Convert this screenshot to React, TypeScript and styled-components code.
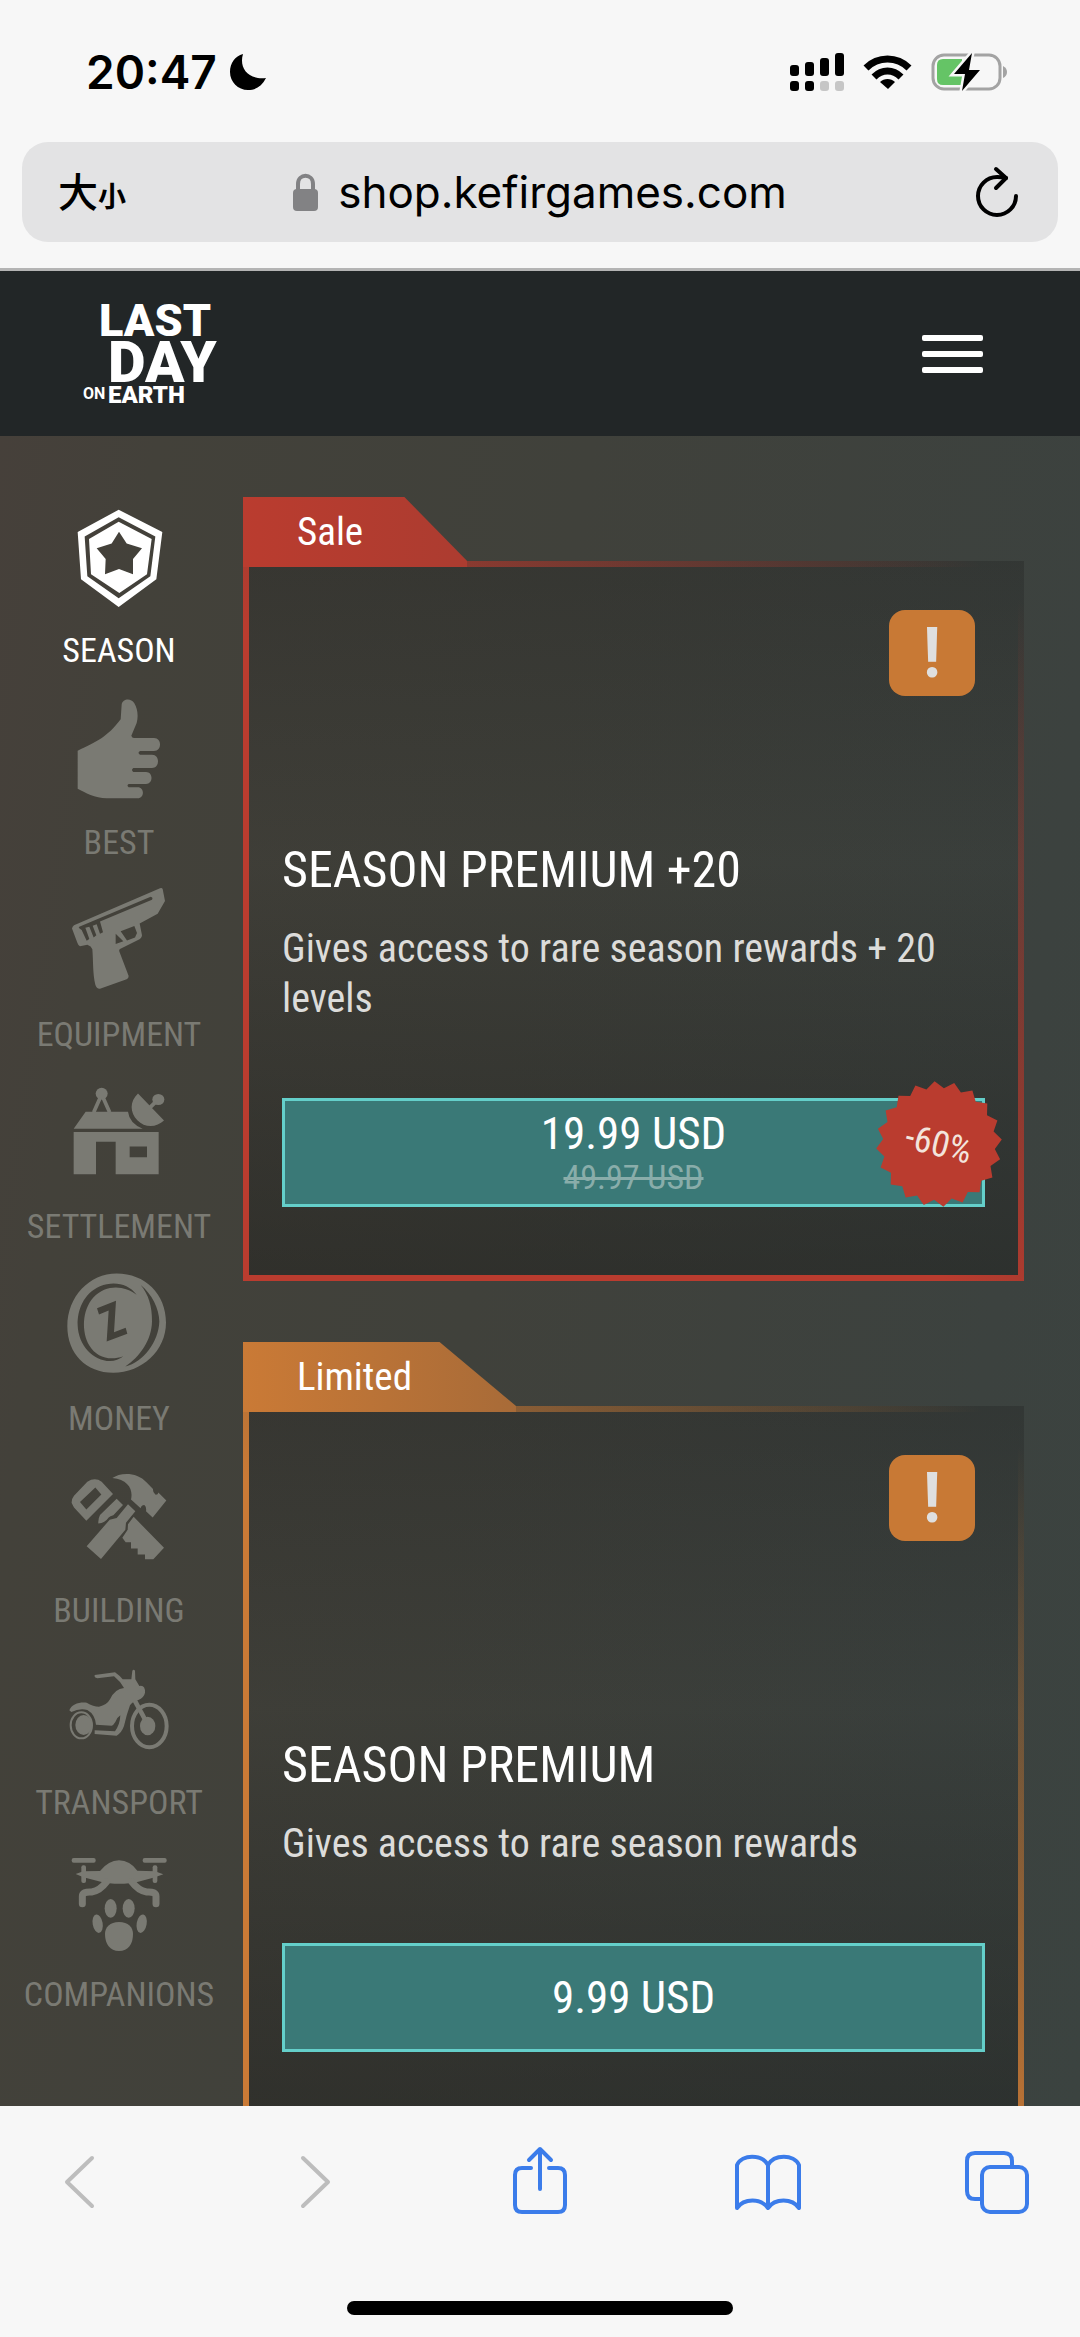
import React from "react";
import styled, { createGlobalStyle } from "styled-components";

const GlobalStyle = createGlobalStyle`
  *, *::before, *::after { box-sizing: border-box; }
  body { margin: 0; background: #f7f7f7; }
  button { border: 0; padding: 0; background: none; color: inherit; font: inherit; cursor: pointer; }
  a { color: inherit; text-decoration: none; }
  h2, p, ul { margin: 0; padding: 0; }
  ul { list-style: none; }
  svg { display: block; overflow: visible; }
`;

const systemFont = `Inter, "Liberation Sans", sans-serif`;
const shopFont = `"Roboto Condensed", Roboto, "Liberation Sans", sans-serif`;

const Screen = styled.div`
  display: flex;
  flex-direction: column;
  height: 100vh;
  font-family: ${shopFont};
`;

/* ---------- browser chrome ---------- */

const StatusBar = styled.div`
  display: flex;
  align-items: center;
  justify-content: space-between;
  padding: 36px 72px 0 86px;
  height: 108px;
  font-family: ${systemFont};
`;

const Clock = styled.div`
  display: flex;
  align-items: center;
  gap: 12px;
  font-size: 46px;
  line-height: 60px;
  font-weight: 600;
  color: #000;
`;

const StatusIcons = styled.div`
  display: flex;
  align-items: center;
  gap: 20px;
`;

const AddressArea = styled.div`
  padding: 34px 22px 26px;
  border-bottom: 3px solid #b4b4b4;
`;

const AddressBar = styled.div`
  display: grid;
  grid-template-columns: 1fr auto 1fr;
  align-items: center;
  height: 100px;
  padding: 0 36px;
  border-radius: 26px;
  background: #e3e3e4;
  color: #000;
  font-family: ${systemFont};
`;

const TextSizeButton = styled.button`
  display: flex;
  justify-self: start;
  align-items: baseline;
  font-family: "Noto Sans CJK SC", sans-serif;
  font-weight: 500;
  font-size: 40px;
  line-height: 60px;
`;

const SmallGlyph = styled.span`
  font-size: 28px;
  font-weight: 700;
`;

const Address = styled.button`
  display: flex;
  align-items: center;
  gap: 20px;
  font-size: 44px;
  line-height: 60px;
`;

const ReloadButton = styled.button`
  justify-self: end;
  padding-right: 4px;
`;

const BottomBar = styled.footer`
  display: flex;
  flex-direction: column;
  align-items: center;
  justify-content: space-between;
  height: 231px;
  padding: 35px 0 22px;
  background: #f7f7f7;
`;

const Tools = styled.nav`
  display: flex;
  justify-content: space-between;
  align-self: stretch;
  padding: 0 43px 0 40px;
`;

const ToolButton = styled.button<{ $muted?: boolean }>`
  color: ${(p) => (p.$muted ? "#bdbdbd" : "#3b7cea")};
`;

const HomeIndicator = styled.div`
  width: 386px;
  height: 14px;
  border-radius: 7px;
  background: #000;
`;

/* ---------- shop ---------- */

const ShopHeader = styled.header`
  display: flex;
  align-items: center;
  justify-content: space-between;
  height: 165px;
  padding: 0 97px 0 83px;
  background: #222627;
  color: #fff;
`;

const Logo = styled.a`
  display: grid;
  grid-template-columns: 25px auto;
  font-family: Roboto, sans-serif;
  font-weight: 900;
`;

const LogoLast = styled.span`
  grid-column: 1 / 3;
  padding-left: 16px;
  font-size: 45px;
  line-height: 38px;
`;

const LogoDay = styled.span`
  grid-column: 2;
  font-size: 58px;
  line-height: 44px;
`;

const LogoOn = styled.span`
  grid-column: 1;
  font-size: 16px;
  line-height: 20px;
  font-weight: 700;
`;

const LogoEarth = styled.span`
  font-size: 24px;
  line-height: 22px;
`;

const MenuButton = styled.button`
  display: grid;
  gap: 10px;
  width: 61px;
`;

const MenuLine = styled.span`
  height: 6px;
  border-radius: 2px;
  background: #fff;
`;

const ShopBody = styled.main`
  flex: 1;
  min-height: 0;
  overflow: hidden;
  display: grid;
  grid-template-columns: 243px minmax(0, 1fr);
  padding: 61px 56px 0 0;
  background: linear-gradient(98deg, #46403a 0%, #43413a 12%, #40413b 45%, #3c423f 85%, #3b4340 100%);
`;

const Categories = styled.ul`
  display: flex;
  flex-direction: column;
  gap: 25px;
  padding: 4px 5px 0 0;
`;

const CategoryLink = styled.a<{ $active?: boolean }>`
  display: flex;
  flex-direction: column;
  align-items: center;
  gap: 15px;
  color: ${(p) => (p.$active ? "#fff" : "#7a7a73")};
  font-size: 34px;
  line-height: 36px;
  text-transform: uppercase;
`;

const Offers = styled.section`
  display: flex;
  flex-direction: column;
  gap: 61px;
`;

const Offer = styled.article`
  display: flex;
  flex-direction: column;
  align-items: flex-start;
  flex-shrink: 0;
`;

/* The tab reaches down over the panel's top border. */
const Tab = styled.div<{ $color: string; $fade: string }>`
  z-index: 1;
  margin-bottom: -6px;
  padding: 0 104px 0 54px;
  background: linear-gradient(90deg, ${(p) => p.$color}, ${(p) => p.$fade});
  clip-path: polygon(0 0, 72% 0, 100% 64px, 100% 100%, 0 100%);
  color: #fff;
  font-size: 39px;
  line-height: 70px;
`;

const Panel = styled.div<{ $color: string }>`
  display: flex;
  flex-direction: column;
  justify-content: space-between;
  align-self: stretch;
  min-height: 720px;
  padding: 43px 33px 68px;
  border: 6px solid transparent;
  border-image: linear-gradient(to top right, ${(p) => p.$color} 45%, transparent 97%) 6;
  background: linear-gradient(180deg, rgba(24, 24, 24, 0.26), rgba(24, 24, 22, 0.08) 42%, rgba(24, 24, 22, 0.42)) border-box;
`;

const InfoButton = styled.button`
  align-self: flex-end;
  width: 86px;
  height: 86px;
  margin-right: 10px;
  border-radius: 16px;
  background: #c87935;
  color: #dfdfdf;
  font-size: 70px;
  line-height: 86px;
  font-weight: 700;
`;

const Title = styled.h2`
  color: #fff;
  font-size: 50px;
  line-height: 60px;
  font-weight: 400;
  text-transform: uppercase;
`;

const Description = styled.p`
  margin: 24px 0 74px;
  color: #dcdcda;
  font-size: 40px;
  line-height: 50px;
`;

const BuyButton = styled.button`
  position: relative;
  display: flex;
  flex-direction: column;
  align-items: center;
  justify-content: center;
  width: 100%;
  height: 109px;
  border: 3px solid #64cfca;
  background: #3a7977;
  color: #fff;
  font-size: 45px;
  line-height: 48px;
`;

const OldPrice = styled.s`
  color: #89adaa;
  font-size: 34px;
  line-height: 38px;
`;

const Seal = styled.span`
  position: absolute;
  top: -20px;
  right: -20px;
  display: grid;
  place-items: center;
  width: 126px;
  height: 126px;
  color: #f3e4dc;
  font-size: 36px;
  line-height: 40px;

  & > * { grid-area: 1 / 1; }
`;

const SealText = styled.span`
  transform: rotate(14deg);
`;

/* ---------- drawings ---------- */

const sealPoints = Array.from({ length: 40 }, (_, i) => {
  const angle = ((-4 + i * 9) * Math.PI) / 180;
  const radius = i % 2 === 0 ? 63 : 56;
  return `${(63 + radius * Math.sin(angle)).toFixed(1)},${(63 - radius * Math.cos(angle)).toFixed(1)}`;
}).join(" ");

const SealShape = () => (
  <svg width="126" height="126" aria-hidden="true">
    <polygon points={sealPoints} fill="#ba3c2f" />
  </svg>
);

const CategoryIcon = ({ box, children }: { box: string; children: React.ReactNode }) => (
  <svg width="116" height="116" viewBox={box} preserveAspectRatio="none" fill="currentColor" fillRule="evenodd" aria-hidden="true">
    {children}
  </svg>
);

const SeasonIcon = () => (
  <CategoryIcon box="183 54 348 314">
    <path d="M356 78 487 138 469 266 356 341 243 266 233 138ZM356 98 254 150 262 258 356 317 451 258 466 150ZM356 110 455 157 441 252 358 303 273 252 267 157ZM357 137 335 169 290 182 317 211 315 252 357 238 399 252 399 211 426 182 380 169Z" />
  </CategoryIcon>
);

const BestIcon = () => (
  <CategoryIcon box="183 574 348 314">
    <path d="M233 730C290 705 320 695 362 645L365 605C368 590 392 586 403 602C412 615 416 635 410 655L394 690Q396 696 402 696H462C486 696 486 731 462 731H420Q411 736 420 741H456C480 741 480 777 456 777H400Q392 782 400 788H438C460 788 460 820 438 820H386Q379 824 386 829H413C434 829 434 859 413 859H320C285 859 255 843 233 833Z" />
  </CategoryIcon>
);

const EquipmentIcon = () => (
  <CategoryIcon box="183 1094 348 314">
    <path d="M216 1212Q217 1206 222 1203L480 1103Q486 1101 488 1105L495 1137L473 1172L419 1198L426 1230Q426 1236 420 1240L360 1267Q356 1269 358 1274L386 1340Q386 1346 380 1349L300 1375Q290 1376 286 1364C278 1335 280 1300 277 1268Q274 1260 262 1256L240 1260Q234 1256 232 1250ZM236 1208Q238 1214 245 1216L260 1245 268 1240 256 1210 268 1207 281 1236 289 1230 278 1204 290 1200 300 1226 309 1222 300 1193 456 1134Q460 1128 452 1126ZM362 1219 381 1244 405 1236 411 1224 403 1205ZM347 1226V1254L370 1246Z" />
  </CategoryIcon>
);

const SettlementIcon = () => (
  <CategoryIcon box="183 73 348 314">
    <path d="M221 222H476V336H347V248H288V336H221ZM389 261V290H441V261ZM221 213 257 167H384Q388 198 428 213ZM414 118 492 191C470 210 435 212 412 190C390 170 388 140 414 118Z" />
    <ellipse cx="305" cy="118" rx="18" ry="16" />
    <ellipse cx="475" cy="134" rx="18" ry="15" />
    <path d="M300 130 281 169M310 130 329 169M447 158 472 136" fill="none" stroke="currentColor" strokeWidth="11" />
  </CategoryIcon>
);

const MoneyIcon = () => (
  <CategoryIcon box="183 593 348 314">
    <path d="M350 605C435 605 498 660 498 738C498 815 425 874 340 874C258 874 202 822 202 748C202 668 268 605 350 605ZM410 663C385 632 340 625 300 640C250 660 232 705 233 745C235 800 280 842 330 842Q352 842 370 829C330 842 290 833 268 800C245 765 245 705 280 670C320 632 375 638 410 663ZM422 636C445 660 457 695 456 735C455 785 420 830 376 857C430 845 476 790 478 735C478 700 455 660 422 636ZM291 699 297 716 326 705 320 789 382 768 377 752 342 764 348 679Z" />
  </CategoryIcon>
);

const BuildingIcon = () => (
  <CategoryIcon box="183 1112 348 314">
    <path d="M215 1226Q214 1215 222 1206L262 1168Q285 1155 305 1168L339 1201L259 1274L222 1238ZM240 1223 259 1243 304 1203 286 1184ZM350 1214 369 1231 340 1259Q330 1262 326 1265Q315 1280 295 1281Q294 1268 300 1258ZM384 1229 406 1248 378 1279 376 1298 303 1377 260 1343 329 1271 350 1266ZM337 1158C360 1143 410 1140 440 1170L459 1188Q458 1198 466 1203Q474 1204 475 1197L499 1219L458 1265L438 1248Q440 1236 433 1231Q423 1232 422 1240L393 1216C400 1190 385 1162 337 1158ZM401 1263 492 1347 460 1378H435V1365H413V1349H393V1332H377L367 1320 383 1298 384 1283Z" />
  </CategoryIcon>
);

const TransportIcon = () => (
  <CategoryIcon box="183 161 348 348">
    <ellipse cx="448" cy="380" rx="52" ry="64" fill="none" stroke="currentColor" strokeWidth="12" />
    <ellipse cx="443" cy="380" rx="23" ry="28" />
    <path d="M404 303 436 362" stroke="currentColor" strokeWidth="14" />
    <ellipse cx="244" cy="378" rx="32" ry="39" fill="none" stroke="currentColor" strokeWidth="6" />
    <ellipse cx="251" cy="377" rx="25" ry="30" />
    <path d="M208 333C215 315 235 308 260 310Q280 322 297 322Q320 318 330 300Q345 268 372 266Q360 245 342 231L292 237Q282 235 284 227L345 219Q358 228 368 240H394L397 214Q401 208 405 214L406 240Q412 250 418 260Q436 256 435 280Q432 295 415 302Q398 306 390 318Q380 345 372 380Q365 400 350 409L284 404V393L345 396Q360 375 361 348Q350 355 346 368Q340 378 335 379L288 376Q285 345 262 332Q240 325 214 338Z" />
  </CategoryIcon>
);

const CompanionsIcon = () => (
  <CategoryIcon box="183 738 348 348">
    <rect x="215" y="777" width="72" height="14" rx="6" />
    <rect x="428" y="777" width="72" height="14" rx="6" />
    <rect x="244" y="799" width="14" height="53" rx="6" />
    <rect x="458" y="799" width="14" height="53" rx="6" />
    <path d="M227 825 250 817 300 816Q325 785 357 784Q390 785 412 815L465 817 490 826 465 835 415 848C380 856 335 856 302 848L250 835Z" />
    <path d="M320 848Q300 875 275 879Q247 877 247 892V914M395 848Q415 875 440 879Q468 877 468 892V914" fill="none" stroke="currentColor" strokeWidth="21" strokeLinecap="round" />
    <ellipse cx="332" cy="928" rx="18" ry="28" />
    <ellipse cx="386" cy="928" rx="18" ry="28" />
    <ellipse cx="293" cy="974" rx="15" ry="28" transform="rotate(-10 293 974)" />
    <ellipse cx="425" cy="974" rx="15" ry="28" transform="rotate(10 425 974)" />
    <path d="M357 969C385 969 399 985 399 1005C399 1035 385 1056 357 1056C330 1056 315 1035 315 1005C315 985 330 969 357 969Z" />
  </CategoryIcon>
);

const MoonIcon = () => (
  <svg width="38" height="38" viewBox="0 0 38 38" aria-hidden="true">
    <path d="M14 1C10 14 18 27 37 25C33 33 27 37 19 37C9 37 1 29 1 19C1 10 6 3 14 1Z" />
  </svg>
);

const SignalIcon = () => (
  <svg width="54" height="38" viewBox="0 0 54 38" aria-hidden="true">
    <rect x="0" y="12" width="9" height="11" rx="3" />
    <rect x="15" y="9" width="9" height="14" rx="3" />
    <rect x="30" y="5" width="9" height="18" rx="3" />
    <rect x="45" y="0" width="9" height="23" rx="3" />
    <rect x="0" y="28" width="9" height="10" rx="3" />
    <rect x="15" y="28" width="9" height="10" rx="3" />
    <rect x="30" y="28" width="9" height="10" rx="3" fill="#c6c6c6" />
    <rect x="45" y="28" width="9" height="10" rx="3" fill="#c6c6c6" />
  </svg>
);

const WifiIcon = () => (
  <svg width="47" height="34" viewBox="0 0 47 34" aria-hidden="true">
    <g fill="none" stroke="#000" strokeWidth="7">
      <path d="M2 13C14 1 33 1 45 13" />
      <path d="M10 22C18 14 29 14 37 22" />
    </g>
    <path d="M16 27C20 23 27 23 31 27L24 34Z" />
  </svg>
);

const BatteryIcon = () => (
  <svg width="77" height="38" viewBox="0 0 77 38" aria-hidden="true">
    <rect x="2" y="2" width="67" height="34" rx="11" fill="none" stroke="#a3a3a3" strokeWidth="3" />
    <path d="M72 13Q76 15 76 19T72 25Z" fill="#a3a3a3" />
    <path d="M12 6H31V32H12Q6 32 6 26V12Q6 6 12 6Z" fill="#65c466" />
    <path d="M41 0 23 21H34L31 38 49 17H38Z" stroke="#f7f7f7" strokeWidth="5" paintOrder="stroke" />
  </svg>
);

const LockIcon = () => (
  <svg width="25" height="37" viewBox="0 0 25 37" aria-hidden="true">
    <rect x="0" y="15" width="25" height="22" rx="4" fill="#828284" />
    <path d="M5 17V10C5 -1 20 -1 20 10V17" fill="none" stroke="#828284" strokeWidth="4" />
  </svg>
);

const ReloadIcon = () => (
  <svg width="42" height="50" viewBox="0 0 42 50" fill="none" stroke="#000" strokeWidth="4" strokeLinecap="round" strokeLinejoin="round" aria-hidden="true">
    <path d="M40 29A19 19 0 1 1 21 10Q26 10 30 11" />
    <path d="M20 2 30 11 20 21" />
  </svg>
);

const ToolIcon = ({ children }: { children: React.ReactNode }) => (
  <svg width="80" height="80" viewBox="0 0 80 80" fill="none" stroke="currentColor" strokeWidth="4" strokeLinecap="round" strokeLinejoin="round" aria-hidden="true">
    {children}
  </svg>
);

/* ---------- content ---------- */

const categories = [
  { name: "Season", Icon: SeasonIcon, active: true },
  { name: "Best", Icon: BestIcon },
  { name: "Equipment", Icon: EquipmentIcon },
  { name: "Settlement", Icon: SettlementIcon },
  { name: "Money", Icon: MoneyIcon },
  { name: "Building", Icon: BuildingIcon },
  { name: "Transport", Icon: TransportIcon },
  { name: "Companions", Icon: CompanionsIcon },
];

const offers = [
  {
    tag: "Sale",
    color: "#ba3c2f",
    fade: "#ac3c30",
    title: "Season Premium +20",
    text: "Gives access to rare season rewards + 20 levels",
    price: "19.99 USD",
    oldPrice: "49.97 USD",
    discount: "-60%",
  },
  {
    tag: "Limited",
    color: "#ca7a36",
    fade: "#a86b38",
    title: "Season Premium",
    text: "Gives access to rare season rewards",
    price: "9.99 USD",
  },
];

export default function App() {
  return (
    <Screen>
      <GlobalStyle />
      <StatusBar>
        <Clock>
          20:47
          <MoonIcon />
        </Clock>
        <StatusIcons>
          <SignalIcon />
          <WifiIcon />
          <BatteryIcon />
        </StatusIcons>
      </StatusBar>
      <AddressArea>
        <AddressBar>
          <TextSizeButton>
            大<SmallGlyph>小</SmallGlyph>
          </TextSizeButton>
          <Address>
            <LockIcon />
            shop.kefirgames.com
          </Address>
          <ReloadButton aria-label="Reload">
            <ReloadIcon />
          </ReloadButton>
        </AddressBar>
      </AddressArea>

      <ShopHeader>
        <Logo href="#">
          <LogoLast>LAST</LogoLast>
          <LogoDay>DAY</LogoDay>
          <LogoOn>ON</LogoOn>
          <LogoEarth>EARTH</LogoEarth>
        </Logo>
        <MenuButton aria-label="Menu">
          <MenuLine />
          <MenuLine />
          <MenuLine />
        </MenuButton>
      </ShopHeader>

      <ShopBody>
        <Categories>
          {categories.map(({ name, Icon, active }) => (
            <li key={name}>
              <CategoryLink href={`#${name.toLowerCase()}`} $active={active}>
                <Icon />
                {name}
              </CategoryLink>
            </li>
          ))}
        </Categories>
        <Offers>
          {offers.map((offer) => (
            <Offer key={offer.tag}>
              <Tab $color={offer.color} $fade={offer.fade}>
                {offer.tag}
              </Tab>
              <Panel $color={offer.color}>
                <InfoButton>!</InfoButton>
                <div>
                  <Title>{offer.title}</Title>
                  <Description>{offer.text}</Description>
                  <BuyButton>
                    {offer.price}
                    {offer.oldPrice && <OldPrice>{offer.oldPrice}</OldPrice>}
                    {offer.discount && (
                      <Seal>
                        <SealShape />
                        <SealText>{offer.discount}</SealText>
                      </Seal>
                    )}
                  </BuyButton>
                </div>
              </Panel>
            </Offer>
          ))}
        </Offers>
      </ShopBody>

      <BottomBar>
        <Tools>
          <ToolButton $muted aria-label="Back">
            <ToolIcon>
              <path d="M52 17 27 41 52 65" />
            </ToolIcon>
          </ToolButton>
          <ToolButton $muted aria-label="Forward">
            <ToolIcon>
              <path d="M34 17 59 41 34 65" />
            </ToolIcon>
          </ToolButton>
          <ToolButton aria-label="Share">
            <ToolIcon>
              <path d="M32 27H23Q16 27 16 34V64Q16 71 23 71H59Q66 71 66 64V34Q66 27 59 27H50M41 48V8M30 19 41 8 52 19" />
            </ToolIcon>
          </ToolButton>
          <ToolButton aria-label="Bookmarks">
            <ToolIcon>
              <path d="M40 24C34 13 14 13 9 24V67C16 57 33 57 40 67C47 57 64 57 71 67V24C66 13 46 13 40 24V67" />
            </ToolIcon>
          </ToolButton>
          <ToolButton aria-label="Tabs">
            <ToolIcon>
              <path d="M24 58H18Q10 58 10 50V20Q10 12 18 12H47Q55 12 55 20V26" />
              <rect x="25" y="26" width="45" height="45" rx="8" />
            </ToolIcon>
          </ToolButton>
        </Tools>
        <HomeIndicator />
      </BottomBar>
    </Screen>
  );
}
